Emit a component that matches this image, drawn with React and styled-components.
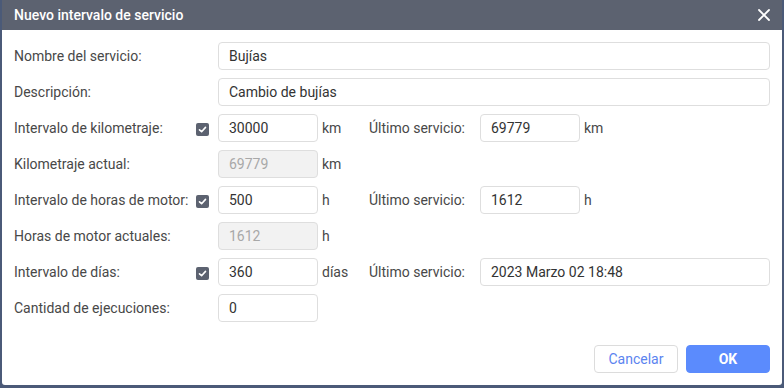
import styled, { createGlobalStyle } from "styled-components";

const GlobalStyle = createGlobalStyle`
  html, body {
    margin: 0;
    padding: 0;
    background: #4b5a78;
    font-family: Roboto, "Liberation Sans", sans-serif;
  }
`;

const rows = [
  { label: "Nombre del servicio:", value: "Bujías", wide: true },
  { label: "Descripción:", value: "Cambio de bujías", wide: true },
  {
    label: "Intervalo de kilometraje:",
    checked: true,
    value: "30000",
    unit: "km",
    last: "69779",
    lastUnit: "km",
  },
  { label: "Kilometraje actual:", value: "69779", unit: "km", disabled: true },
  {
    label: "Intervalo de horas de motor:",
    checked: true,
    value: "500",
    unit: "h",
    last: "1612",
    lastUnit: "h",
  },
  { label: "Horas de motor actuales:", value: "1612", unit: "h", disabled: true },
  {
    label: "Intervalo de días:",
    checked: true,
    value: "360",
    unit: "días",
    last: "2023 Marzo 02 18:48",
    lastWide: true,
  },
  { label: "Cantidad de ejecuciones:", value: "0" },
];

export default function App() {
  return (
    <>
      <GlobalStyle />
      <Dialog>
        <Header>
          <Title>Nuevo intervalo de servicio</Title>
          <CloseButton aria-label="Cerrar">
            <svg width="12" height="12" viewBox="0 0 12 12">
              <path
                d="M1 1L11 11M11 1L1 11"
                stroke="#fff"
                strokeWidth="1.8"
                strokeLinecap="round"
              />
            </svg>
          </CloseButton>
        </Header>
        <Body>
          {rows.map((row) => (
            <Row key={row.label}>
              <Label>{row.label}</Label>
              <CheckSlot>{row.checked && <Checkbox />}</CheckSlot>
              <Field
                $wide={row.wide}
                $disabled={row.disabled}
                readOnly
                value={row.value}
              />
              {row.unit && <Unit>{row.unit}</Unit>}
              {row.last && (
                <>
                  <LastLabel>Último servicio:</LastLabel>
                  <Field $wide={row.lastWide} readOnly value={row.last} />
                  {row.lastUnit && <Unit>{row.lastUnit}</Unit>}
                </>
              )}
            </Row>
          ))}
        </Body>
        <Footer>
          <Button>Cancelar</Button>
          <Button $primary>OK</Button>
        </Footer>
      </Dialog>
    </>
  );
}

function Checkbox() {
  return (
    <CheckBox>
      <svg width="9" height="9" viewBox="0 0 9 9">
        <path
          d="M1.5 4.8L3.6 6.7L7.5 2.4"
          fill="none"
          stroke="#fff"
          strokeWidth="1.6"
          strokeLinecap="round"
          strokeLinejoin="round"
        />
      </svg>
    </CheckBox>
  );
}

const Dialog = styled.div`
  margin: 0 2px;
  height: 385px;
  background: #fff;
  display: flex;
  flex-direction: column;
  border-radius: 0 0 3px 3px;
  overflow: hidden;
`;

const Header = styled.header`
  height: 30px;
  flex: none;
  background: #5c6270;
  display: flex;
  align-items: center;
  justify-content: space-between;
  padding: 0 8px 0 12px;
`;

const Title = styled.h1`
  margin: 0;
  font-size: 14px;
  font-weight: 500;
  color: #fff;
`;

const CloseButton = styled.button`
  all: unset;
  width: 20px;
  height: 20px;
  display: flex;
  align-items: center;
  justify-content: center;
`;

const Body = styled.main`
  display: flex;
  flex-direction: column;
  gap: 8px;
  padding: 12px 12px 0 12px;
  flex: 1;
`;

const Row = styled.div`
  display: flex;
  align-items: center;
  height: 28px;
`;

const Label = styled.span`
  width: 182px;
  flex: none;
  font-size: 14px;
  color: #484848;
  white-space: nowrap;
`;

const CheckSlot = styled.span`
  width: 13px;
  margin-right: 9px;
  flex: none;
  display: flex;
  align-items: center;
`;

const CheckBox = styled.span`
  width: 13px;
  height: 13px;
  border-radius: 2px;
  background: #5c6270;
  display: flex;
  align-items: center;
  justify-content: center;
  margin-top: 2px;
`;

const Field = styled.input`
  box-sizing: border-box;
  height: 28px;
  width: ${(p) => (p.$wide ? "auto" : "100px")};
  flex: ${(p) => (p.$wide ? "1" : "none")};
  min-width: 0;
  border: 1px solid #dedede;
  border-radius: 4px;
  padding: 0 10px;
  font-family: inherit;
  font-size: 14px;
  color: ${(p) => (p.$disabled ? "#a8a8a8" : "#333")};
  background: ${(p) => (p.$disabled ? "#f2f2f2" : "#fff")};
  outline: none;
`;

const Unit = styled.span`
  width: 47px;
  flex: none;
  padding-left: 4px;
  font-size: 14px;
  color: #484848;
`;

const LastLabel = styled.span`
  width: 111px;
  flex: none;
  font-size: 14px;
  color: #484848;
`;

const Footer = styled.footer`
  display: flex;
  justify-content: flex-end;
  gap: 8px;
  padding: 0 12px 12px 0;
`;

const Button = styled.button`
  box-sizing: border-box;
  width: 84px;
  height: 28px;
  border-radius: 4px;
  font-family: inherit;
  font-size: 14px;
  font-weight: ${(p) => (p.$primary ? 700 : 400)};
  border: 1px solid ${(p) => (p.$primary ? "#5b8bfd" : "#dcdcdc")};
  background: ${(p) => (p.$primary ? "#5b8bfd" : "#fff")};
  color: ${(p) => (p.$primary ? "#fff" : "#5b84f0")};
  cursor: pointer;
`;
